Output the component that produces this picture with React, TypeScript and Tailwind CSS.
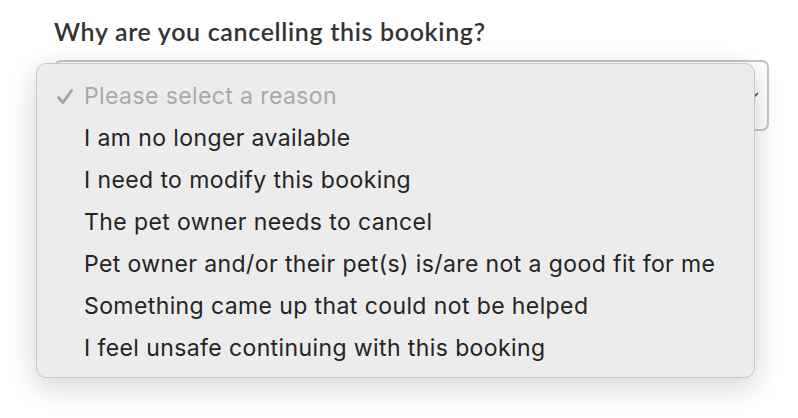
import React from "react";

const items = [
  "I am no longer available",
  "I need to modify this booking",
  "The pet owner needs to cancel",
  "Pet owner and/or their pet(s) is/are not a good fit for me",
  "Something came up that could not be helped",
  "I feel unsafe continuing with this booking",
];

export default function App() {
  return (
    <div className="relative w-[798px] h-[418px] bg-white overflow-hidden">
      <div className="pl-[54px] pt-[15px]">
        <h1
          className="text-[25px] font-semibold text-[#333333] leading-[32px] tracking-[0.66px]"
          style={{ fontFamily: "Lato, 'Open Sans', sans-serif" }}
        >
          Why are you cancelling this booking?
        </h1>
        <div className="mt-[13px] w-[715px] h-[71px] rounded-[7px] border-2 border-[#c3c7cb] bg-white flex items-center justify-end pr-[8px]">
          <svg width="14" height="10" viewBox="0 0 14 10">
            <path d="M1 2 L7 8 L13 2" fill="none" stroke="#444" strokeWidth="1.6" />
          </svg>
        </div>
      </div>
      <div
        className="absolute left-[36px] top-[63px] w-[719px] h-[315px] rounded-[10px] bg-[#ececec] border border-[#c9c9c9] shadow-[0_8px_30px_rgba(0,0,0,0.18)] pt-[11px]"
        style={{ fontFamily: "Inter, 'Noto Sans', sans-serif" }}
      >
        <div className="flex items-center h-[42px] text-[23px] tracking-[0.4px] text-[#a9a9a9]">
          <span className="w-[47px] flex justify-end pr-[10px]">
            <svg width="18" height="17" viewBox="0 0 18 17">
              <path d="M2.5 9.5 L7 14.5 L15.5 2.5" fill="none" stroke="#a3a3a3" strokeWidth="2.8" strokeLinecap="round" strokeLinejoin="round" />
            </svg>
          </span>
          <span>Please select a reason</span>
        </div>
        {items.map((t) => (
          <div key={t} className="flex items-center h-[42px] text-[23px] tracking-[0.4px] text-[#242424] pl-[47px]">
            {t}
          </div>
        ))}
      </div>
    </div>
  );
}
